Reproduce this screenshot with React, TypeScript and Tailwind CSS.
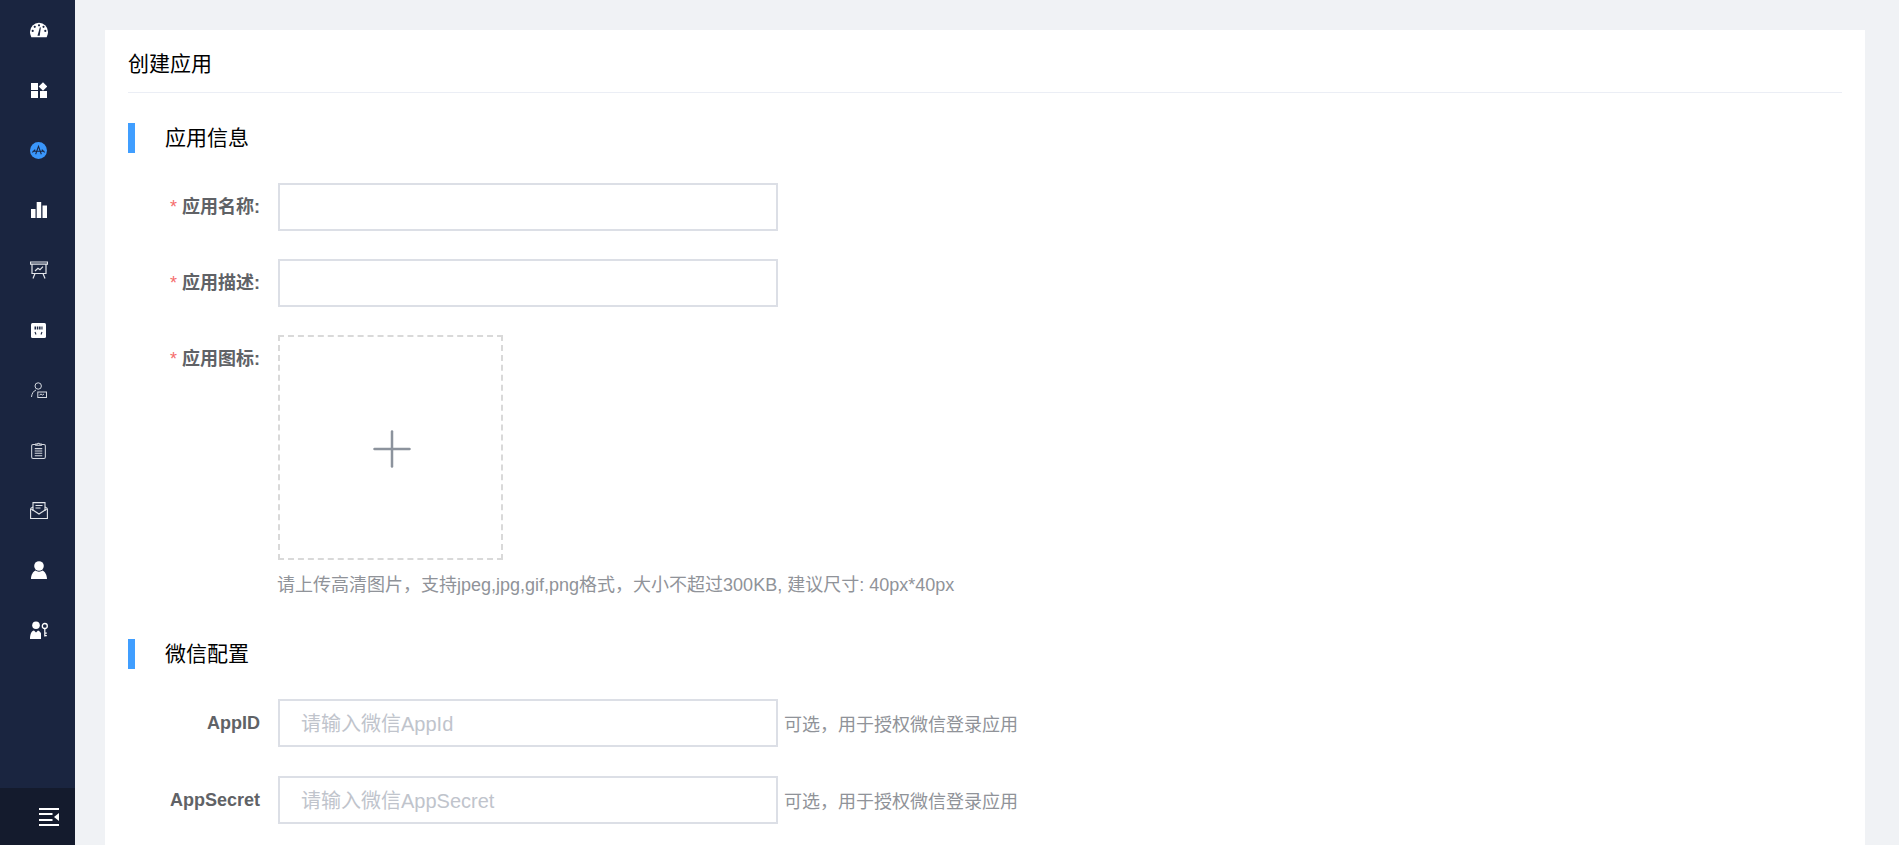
import { Plus } from "lucide-react";

const font = "font-['Liberation_Sans','Noto_Sans_CJK_SC',sans-serif]";

const navIcons = [
  // dashboard gauge
  <svg key="gauge" viewBox="0 0 20 16" className="h-[16px] w-[18px]" fill="#fff">
    <path d="M10 0a10 10 0 0 0-10 10c0 2.300.6 4 1.500 6h17c.9-2 1.500-3.700 1.500-6A10 10 0 0 0 10 0z" />
    <g fill="#1a2540">
      <circle cx="10" cy="2.800" r="1.200" />
      <circle cx="5.300" cy="4.500" r="1.200" />
      <circle cx="15" cy="4.500" r="1.200" />
      <circle cx="3" cy="9" r="1.200" />
      <circle cx="17" cy="9" r="1.200" />
      <path d="M8.300 14.500L11 5l1 .3-1.200 9.200z" />
    </g>
  </svg>,
  // grid with diamond
  <svg key="grid" viewBox="0 0 16 16" className="h-[16px] w-[16px]" fill="#fff">
    <rect x="0" y="1" width="7" height="7" />
    <rect x="0" y="9" width="7" height="7" />
    <rect x="9" y="9" width="7" height="7" />
    <path d="M12 .3l4.300 4.200L12 8.700 7.700 4.500z" />
  </svg>,
  // app store, active
  <svg key="app" viewBox="0 0 18 18" className="h-[17px] w-[17px]">
    <circle cx="9" cy="9" r="9" fill="#3a96fa" />
    <path d="M6 13l3-8.500 3 8.500M2.500 11l3-3M15.500 11l-3-3M3 9.800h12" fill="none" stroke="#1a2540" strokeWidth="1.100" />
  </svg>,
  // bars
  <svg key="bars" viewBox="0 0 16 16" className="h-[16px] w-[16px]" fill="#fff">
    <rect x="0" y="7" width="4.500" height="9" />
    <rect x="5.700" y="0" width="4.500" height="16" />
    <rect x="11.500" y="3.500" width="4.500" height="12.500" />
  </svg>,
  // presentation board
  <svg key="board" viewBox="0 0 18 18" className="h-[18px] w-[18px]" fill="none" stroke="#e2e5ea" strokeWidth="1.200">
    <path d="M.5 1h17v2.200H.5z" />
    <path d="M2 3v9.500h14V3" />
    <path d="M5 10l3-2.800 2 1.500 3-3" />
    <path d="M5 12.500L3 17.500M13 12.500l2 5" />
  </svg>,
  // filled square
  <svg key="store" viewBox="0 0 15 15" className="h-[15px] w-[15px]">
    <rect width="15" height="15" rx="1.500" fill="#fff" />
    <path d="M3.500 5h8" stroke="#1a2540" strokeWidth="3" strokeDasharray="1.500 .8" />
    <path d="M4 9l1 2.500M11 9l-1 2.500" stroke="#1a2540" strokeWidth="1.100" />
  </svg>,
  // person with card
  <svg key="person" viewBox="0 0 16 16" className="h-[16px] w-[16px]" fill="none" stroke="#d5d9e0" strokeWidth="1">
    <circle cx="7.200" cy="4" r="3.200" />
    <path d="M.5 15c.3-3.500 2-6 4.500-7" />
    <rect x="6.800" y="10" width="8.700" height="5.500" fill="#1a2540" />
    <path d="M8.500 13l1.500-1 1.500 1 1.500-1" />
  </svg>,
  // clipboard
  <svg key="clip" viewBox="0 0 16 18" className="h-[17px] w-[15px]" fill="none" stroke="#d5d9e0" strokeWidth="1.100">
    <rect x=".7" y="2.500" width="14.600" height="15" rx="1.500" />
    <path d="M5 3.500V2h1.800a1.300 1.300 0 0 1 2.400 0H11v1.500z" fill="#1a2540" />
    <path d="M4 7h8M4 9.500h8M4 12h8M4 14.500h8" />
  </svg>,
  // open mail
  <svg key="mail" viewBox="0 0 18 17" className="h-[17px] w-[18px]" fill="none" stroke="#e2e5ea" strokeWidth="1.100">
    <path d="M.6 6.500v10h16.800v-10" />
    <path d="M.6 6.500L3 5M17.400 6.500L15 5M.6 6.500l8.400 5.500 8.400-5.500" />
    <path d="M3 9V.6h12V9" />
    <path d="M5.500 3.500h7M5.500 6h5" />
  </svg>,
  // user filled
  <svg key="user" viewBox="0 0 16 18" className="h-[18px] w-[16px]" fill="#fff">
    <circle cx="8" cy="5" r="4.800" />
    <path d="M0 18c0-4 2-7.500 4.500-8.500C6 11 10 11 11.500 9.500 14 10.500 16 14 16 18z" />
  </svg>,
  // user with key
  <svg key="userkey" viewBox="0 0 18 18" className="h-[18px] w-[18px]" fill="#fff">
    <circle cx="6" cy="4.300" r="3.800" />
    <path d="M0 18c0-5 1.500-8 4-8.500L6 11.500l2-2c1.500.5 2.500 1.500 3 3V18z" />
    <circle cx="14.800" cy="5" r="2.500" fill="none" stroke="#fff" strokeWidth="1.300" />
    <path d="M14.200 7.500h1.200v8h-1.200zM15.300 11.500h1.500v1.200h-1.500zM15.300 14h1.500v1.200h-1.500z" />
  </svg>,
];

function Sidebar() {
  return (
    <aside className="flex h-full w-[75px] shrink-0 flex-col bg-[#1a2540]">
      <nav className="flex-1">
        {navIcons.map((icon, i) => (
          <div key={i} className="flex h-[60px] items-center justify-center pl-[2px]">
            {icon}
          </div>
        ))}
      </nav>
      <div className="flex h-[57px] items-center justify-center bg-[#141b2d] pl-[23px]">
        <svg viewBox="0 0 20 18" className="h-[18px] w-[20px]" fill="#fff">
          <rect y="0" width="20" height="2" />
          <rect y="5" width="13.500" height="2" />
          <rect y="11" width="13.500" height="2" />
          <rect y="16" width="20" height="2" />
          <path d="M20 5v8l-5-4z" />
        </svg>
      </div>
    </aside>
  );
}

function SectionTitle({ children }: { children: string }) {
  return (
    <div className="flex h-[30px] items-center border-l-[7px] border-[#409eff] pl-[30px] text-[21px] text-black">
      {children}
    </div>
  );
}

type FieldProps = {
  label: string;
  required?: boolean;
  placeholder?: string;
  hint?: string;
  className?: string;
};

function TextField({ label, required, placeholder, hint, className }: FieldProps) {
  return (
    <div className={`flex items-center ${className ?? ""}`}>
      <label className="w-[150px] pr-[18px] text-right text-[18px] font-bold text-[#606266]">
        {required && <span className="mr-[5px] font-normal text-[#f56c6c]">*</span>}
        {label}
      </label>
      <input
        placeholder={placeholder}
        className="h-[48px] w-[500px] border-2 border-[#dcdfe6] bg-white px-[21px] pt-[2px] text-[20px] outline-none placeholder:text-[#c0c4cc]"
      />
      {hint && <span className="ml-[6px] pt-[4px] text-[18px] text-[#909399]">{hint}</span>}
    </div>
  );
}

export default function App() {
  return (
    <div className={`flex h-[845px] overflow-hidden bg-[#f0f2f5] ${font}`}>
      <Sidebar />
      <main className="flex-1 pt-[30px] pl-[30px] pr-[34px]">
        <div className="h-full bg-white px-[23px]">
          <h1 className="flex h-[63px] items-center border-b border-[#ebeef5] pt-[6px] text-[21px] font-normal text-black">
            创建应用
          </h1>
          <div className="pt-[30px]">
            <SectionTitle>应用信息</SectionTitle>
          </div>
          <TextField label="应用名称:" required className="mt-[30px]" />
          <TextField label="应用描述:" required className="mt-[28px]" />
          <div className="mt-[28px] flex">
            <label className="w-[150px] pt-[11px] pr-[18px] text-right text-[18px] font-bold text-[#606266]">
              <span className="mr-[5px] font-normal text-[#f56c6c]">*</span>
              应用图标:
            </label>
            <div>
              <div className="flex h-[225px] w-[225px] items-center justify-center border-2 border-dashed border-[#d9d9d9] pt-[3px] pl-[2px] text-[#8c939d]">
                <Plus size={60} strokeWidth={2.5} absoluteStrokeWidth />
              </div>
              <p className="mt-[12px] -ml-px text-[18px] text-[#909399]">
                请上传高清图片，支持jpeg,jpg,gif,png格式，大小不超过300KB, 建议尺寸: 40px*40px
              </p>
            </div>
          </div>
          <div className="pt-[40px]">
            <SectionTitle>微信配置</SectionTitle>
          </div>
          <TextField label="AppID" placeholder="请输入微信AppId" hint="可选，用于授权微信登录应用" className="mt-[30px]" />
          <TextField label="AppSecret" placeholder="请输入微信AppSecret" hint="可选，用于授权微信登录应用" className="mt-[29px]" />
        </div>
      </main>
    </div>
  );
}
